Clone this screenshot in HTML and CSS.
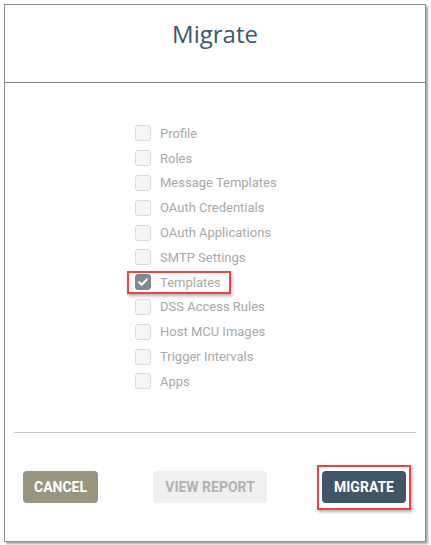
FILE: index.html
```html
<!DOCTYPE html>
<html>
<head>
  <title>Migrate</title>
  <link rel="stylesheet" href="styles.css">
</head>
<body>

<div class="dialog">
  <div class="dialog-header">
    <h1>Migrate</h1>
  </div>

  <div class="dialog-body">
    <ul class="options">
      <li><span class="box"></span>Profile</li>
      <li><span class="box"></span>Roles</li>
      <li><span class="box"></span>Message Templates</li>
      <li><span class="box"></span>OAuth Credentials</li>
      <li><span class="box"></span>OAuth Applications</li>
      <li><span class="box"></span>SMTP Settings</li>
      <li class="marked">
        <span class="box checked">
          <svg width="12" height="12" viewBox="0 0 12 12"><path d="M2.2 6.3 L4.8 8.8 L9.8 3.4" fill="none" stroke="#fff" stroke-width="2.2" stroke-linecap="round" stroke-linejoin="round"/></svg>
        </span>Templates
      </li>
      <li><span class="box"></span>DSS Access Rules</li>
      <li><span class="box"></span>Host MCU Images</li>
      <li><span class="box"></span>Trigger Intervals</li>
      <li><span class="box"></span>Apps</li>
    </ul>
  </div>

  <div class="dialog-footer">
    <div class="divider"></div>
    <div class="buttons">
      <button type="button" class="btn cancel">CANCEL</button>
      <button type="button" class="btn report">VIEW REPORT</button>
      <button type="button" class="btn migrate marked-btn">MIGRATE</button>
    </div>
  </div>
</div>

</body>
</html>
```

FILE: styles.css
```css
body {
  margin: 0;
  background-color: #fff;
  font-family: Roboto, "Liberation Sans", sans-serif;
}

.dialog {
  margin: 4px;
  width: 422px;
  height: 538px;
  box-sizing: border-box;
  border: 1px solid #8c8c8c;
  box-shadow: 2px 2px 2px rgba(0, 0, 0, 0.35);
  display: flex;
  flex-direction: column;
}

.dialog-header {
  height: 77px;
  border-bottom: 1px solid #808080;
  text-align: center;
}

.dialog-header h1 {
  margin: 0;
  padding-top: 13px;
  font: normal 24px/32px "Open Sans", sans-serif;
  color: #3b5770;
}

.dialog-body {
  flex: 1;
  padding-top: 38px;
}

.options {
  list-style: none;
  margin: 0;
  padding: 0 0 0 130px;
}

.options li {
  position: relative;
  display: flex;
  align-items: center;
  height: 24.8px;
  font-size: 13px;
  color: #a9a9a9;
}

.box {
  width: 14px;
  height: 14px;
  margin-right: 9px;
  border: 1px solid #dadada;
  border-radius: 3px;
  background-color: #f6f6f6;
  display: flex;
  align-items: center;
  justify-content: center;
}

.box.checked {
  background-color: #7f8893;
  border-color: #7f8893;
}

.marked::after {
  content: "";
  position: absolute;
  left: -8px;
  top: 1px;
  width: 100px;
  height: 19px;
  border: 2px solid #ec4444;
  box-shadow: 1px 2px 3px rgba(0, 0, 0, 0.3);
}

.dialog-footer {
  height: 109px;
}

.divider {
  margin: 0 9px;
  border-top: 1px solid #c6c6c6;
}

.buttons {
  display: flex;
  justify-content: space-between;
  padding: 38px 19px 0 18px;
}

.btn {
  position: relative;
  height: 32px;
  padding: 0 11px;
  border: none;
  border-radius: 4px;
  font: bold 14px Roboto, "Liberation Sans", sans-serif;
  cursor: pointer;
}

.cancel {
  background-color: #99957f;
  color: #fff;
}

.report {
  padding: 0 12px;
  background-color: #f0f0f0;
  color: #b2b2b2;
}

.migrate {
  padding: 0 12px;
  background-color: #405666;
  color: #fff;
}

.marked-btn::after {
  content: "";
  position: absolute;
  left: -5px;
  right: -5px;
  top: -6px;
  bottom: -7px;
  border: 2px solid #ec4444;
  box-shadow: 1px 2px 3px rgba(0, 0, 0, 0.3);
}
```
